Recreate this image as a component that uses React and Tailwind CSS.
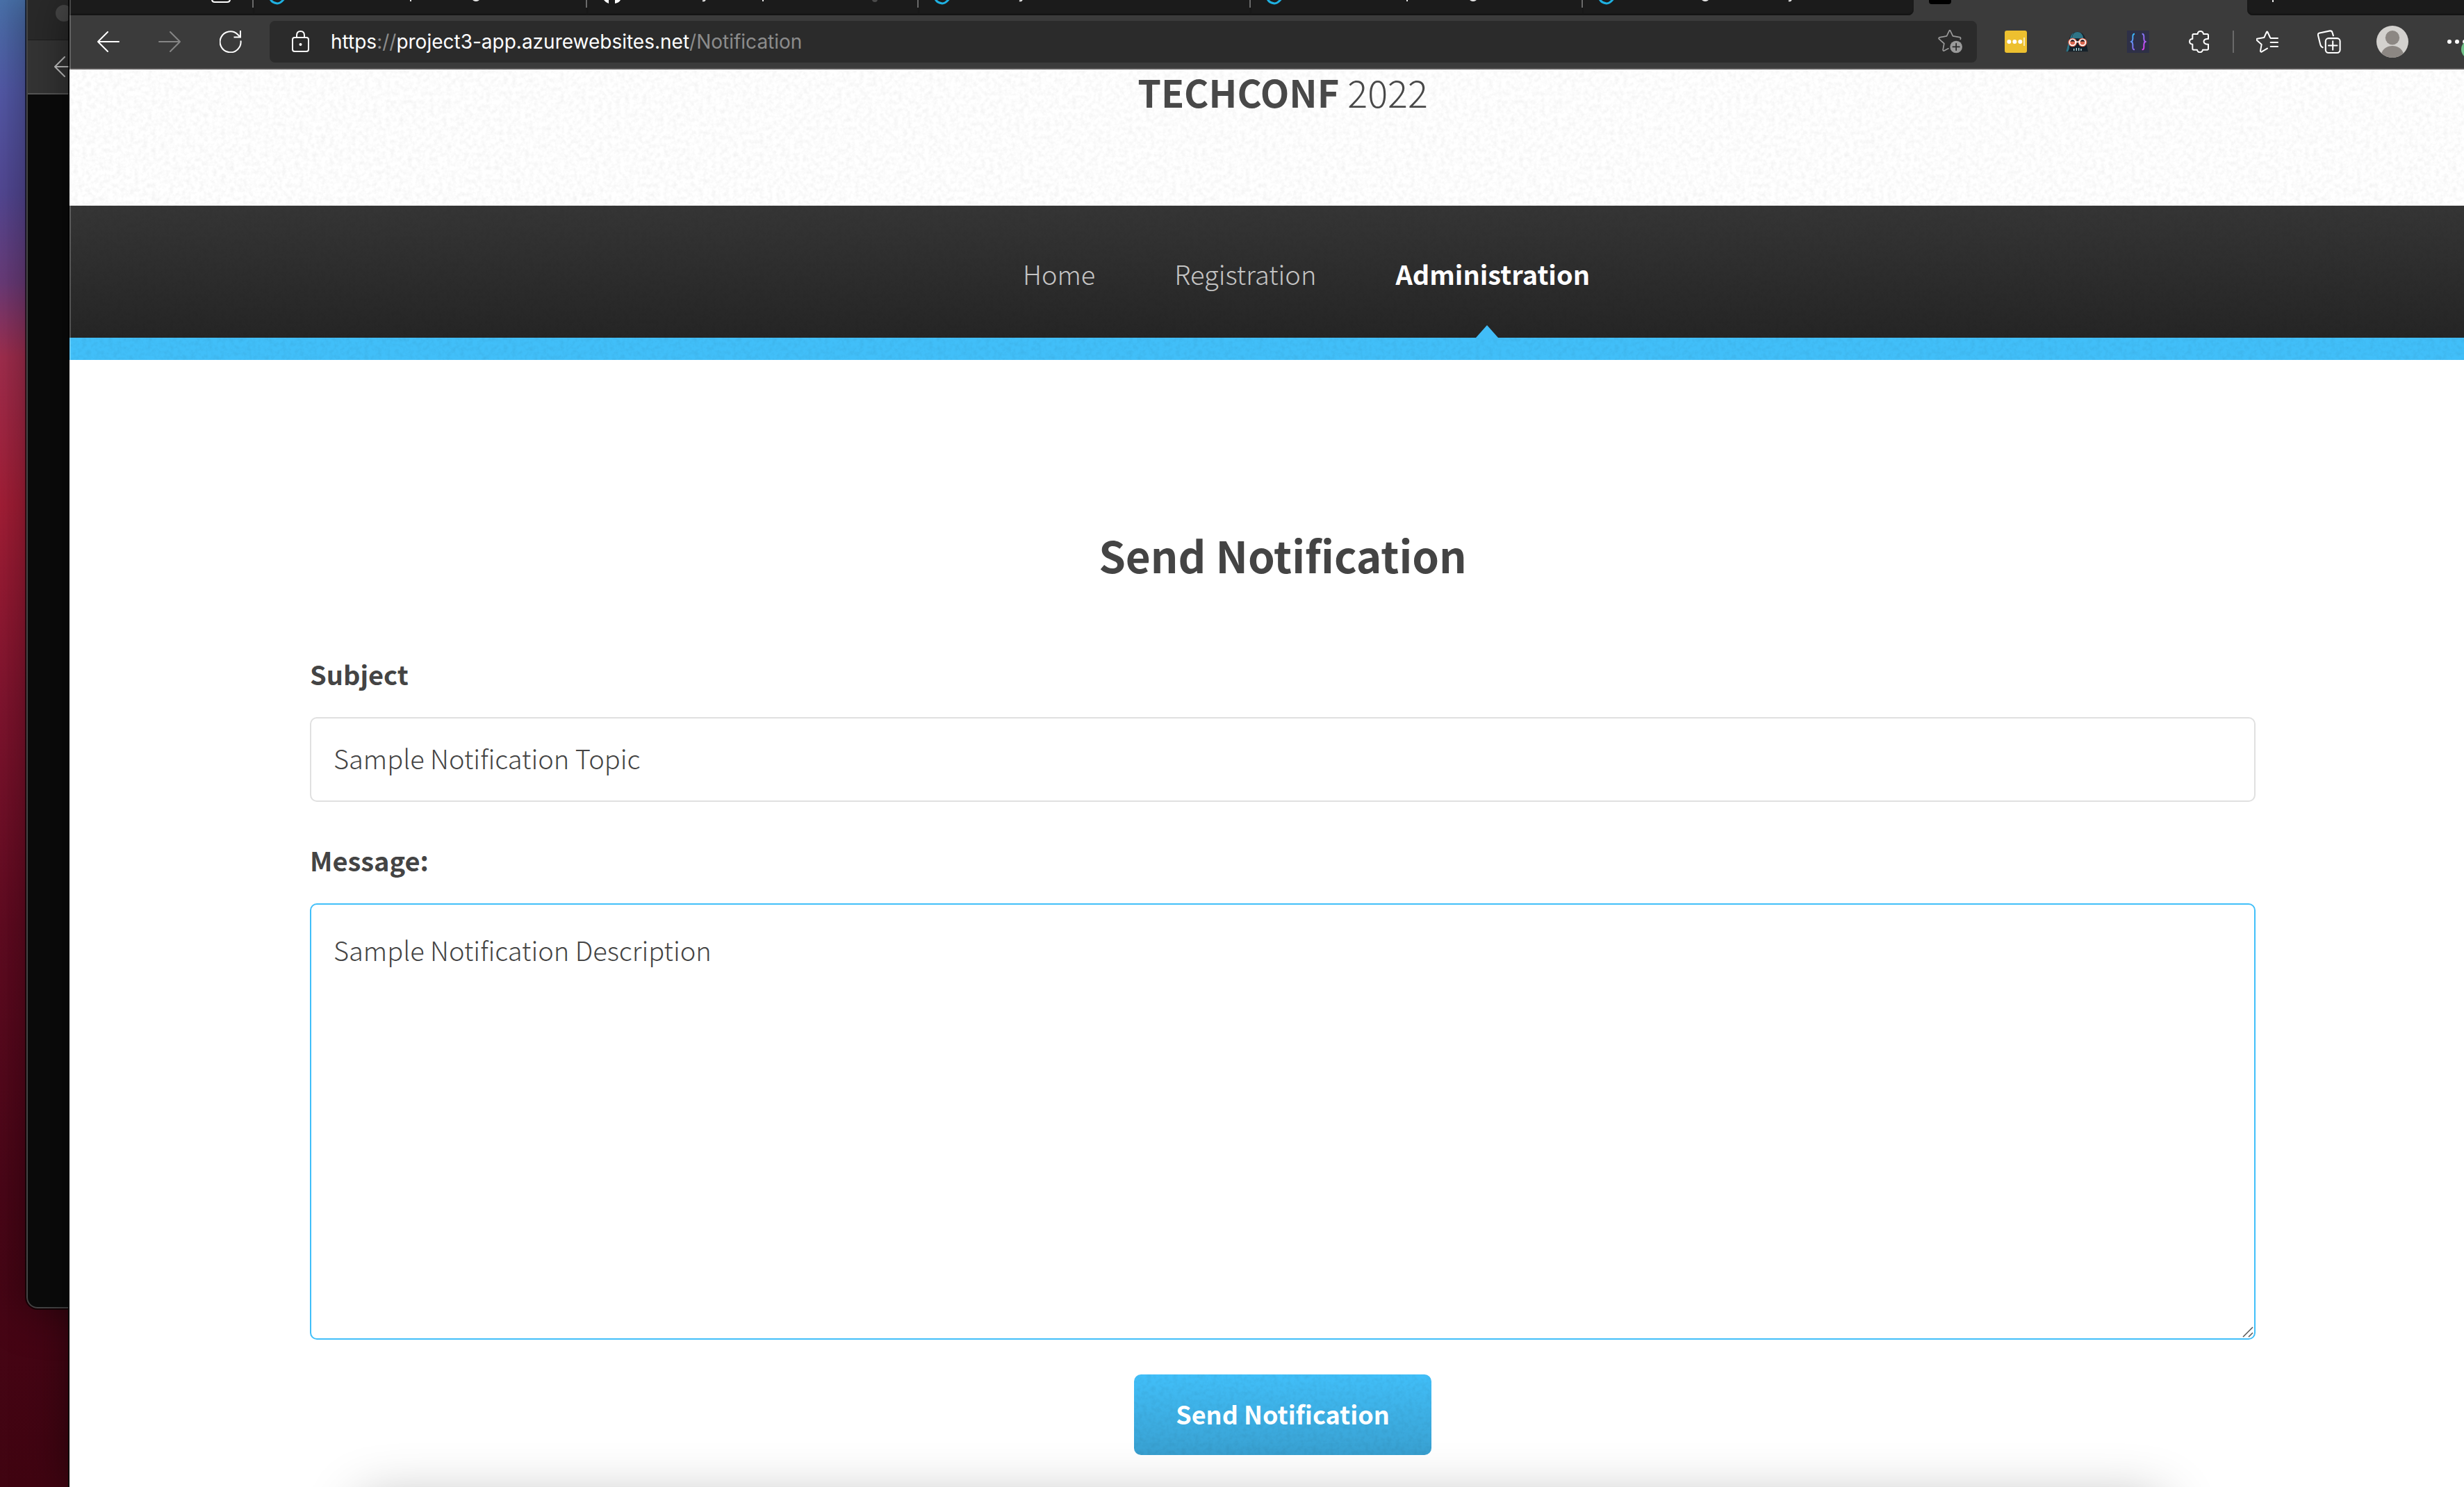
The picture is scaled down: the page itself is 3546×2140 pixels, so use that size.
import React from "react";

/* Fine paper grain laid over header, navigation and button surfaces */
function Grain({ id, strength }) {
  return (
    <svg aria-hidden="true" className="pointer-events-none absolute inset-0 size-full">
      <filter id={id} x="0" y="0" width="100%" height="100%">
        <feTurbulence type="fractalNoise" baseFrequency="0.16" numOctaves="3" seed="4" stitchTiles="stitch" />
        <feColorMatrix values={`0 0 0 0 0  0 0 0 0 0  0 0 0 0 0  ${strength} 0 0 0 ${-strength * 0.38}`} />
      </filter>
      <rect width="100%" height="100%" filter={`url(#${id})`} />
    </svg>
  );
}

function IconButton({ label, className = "", children }) {
  return (
    <button type="button" aria-label={label} className={"flex shrink-0 items-center justify-center " + className}>
      {children}
    </button>
  );
}

function ArrowLeft({ className }) {
  return (
    <svg viewBox="0 0 32 32" className={className} fill="none" stroke="currentColor" strokeWidth="2" strokeLinecap="round" strokeLinejoin="round">
      <path d="M31 16H1M15 2 1 16l14 14" />
    </svg>
  );
}

const tabs = [
  { width: "w-[265px]", marks: "window" },
  { width: "w-[480px]", marks: "ring", text: ["p:226", "g:320"] },
  { width: "w-[477px]", marks: "github", text: ["y:170", "p:253", "d:414"] },
  { width: "w-[478px]", marks: "ring", text: ["y:149"] },
  { width: "w-[478px]", marks: "ring", text: ["p:225", "g:320"] },
  { width: "w-[476px]", marks: "ring", text: ["g:176", "y:300"], last: true },
];

function Tab({ tab }) {
  return (
    <div
      className={
        "flex h-full shrink-0 items-start bg-[#1b1b1b] shadow-[inset_0_-2px_2px_#141414] " +
        tab.width + (tab.last ? " rounded-br-lg" : "")
      }
    >
      <svg viewBox="0 0 480 12" className="h-3 w-[480px] shrink-0" fill="none">
        {tab.marks === "window" && <path d="M205-4v3q0 4 4 4h18q4 0 4-4v-3M212-4v4" stroke="#fff" strokeWidth="2" />}
        {tab.marks === "ring" && <path d="M23-4q2 8 11 9 5 0 11-8" stroke="#1fb0e0" strokeWidth="3" />}
        {tab.marks === "github" && (
          <path d="M24 0q2 3 7 5V0q-2-1-2-3h12q0 2-1 3v5q6-1 8-5v-4H24z" fill="#fff" />
        )}
        {(tab.text || []).map((t) => {
          const [glyph, at] = t.split(":");
          const x = Number(at);
          if (glyph === "p") return <path key={t} d={`M${x}-2v4`} stroke="#e6e6e6" strokeWidth="2" />;
          if (glyph === "y") return <path key={t} d={`M${x}-1q-1 3-4 2`} stroke="#e6e6e6" strokeWidth="2" />;
          if (glyph === "d") return <circle key={t} cx={x} cy="-1" r="4" fill="#4a4a4a" />;
          return <ellipse key={t} cx={x} cy="-1" rx="5" ry="3" fill="#e6e6e6" />;
        })}
      </svg>
    </div>
  );
}

function TabStrip() {
  return (
    <div className="flex h-[22px] bg-[#3b3b3b]">
      {tabs.map((tab, i) => (
        <React.Fragment key={i}>
          <Tab tab={tab} />
          {!tab.last && <div className="-ml-0.5 h-[11px] w-0.5 shrink-0 bg-[#6a6a6a]" />}
        </React.Fragment>
      ))}
      <div className="w-[480px] shrink-0 pl-[22px]">
        <div className="h-1.5 w-8 rounded-b-sm bg-black" />
      </div>
      <div className="flex-1 rounded-bl-lg bg-[#1b1b1b] pl-9 shadow-[inset_0_-2px_2px_#141414]">
        <div className="h-[3px] w-0.5 bg-[#e6e6e6]" />
      </div>
    </div>
  );
}

function AddressBar() {
  return (
    <div className="ml-10 flex h-[60px] flex-1 items-center rounded-lg bg-[#2b2b2b] pr-5 pl-8">
      <svg viewBox="0 0 26 32" className="h-8 w-[26px] shrink-0" fill="none" stroke="#fff" strokeWidth="2">
        <rect x="1" y="10" width="23" height="20" rx="3" />
        <path d="M7 10V7q0-6 5.500-6T18 7v3" />
        <circle cx="12.500" cy="20" r="2" fill="#fff" stroke="none" />
      </svg>
      <div
        role="textbox"
        aria-label="Address"
        className="ml-[30px] flex-1 font-['Inter',sans-serif] text-[28px] leading-8 whitespace-nowrap text-[#8c8c8c]"
      >
        <span className="text-white">https</span>://<span className="text-white">project3-app.azurewebsites.net</span>/Notification
      </div>
      <IconButton label="Add this page to favorites">
        <svg viewBox="58 72 106 106" className="size-9" fill="none" stroke="#9a9a9a" strokeWidth="5" strokeLinecap="round" strokeLinejoin="round">
          <path d="M153 114q3-6-3-8l-29-5-11-23q-2-3-4 0L95 101l-31 6q-4 2-2 6l22 20-5 27q1 5 5 3l18-9" />
          <circle cx="135" cy="147" r="26" fill="#9a9a9a" stroke="none" />
          <path d="M135 133v28M121 147h28" stroke="#2b2b2b" />
        </svg>
      </IconButton>
    </div>
  );
}

function Toolbar() {
  return (
    <div className="flex h-[78px] items-center border-b-2 border-[#5c5a5a] bg-[#3b3b3b] pr-[38px] pl-10 text-white">
      <IconButton label="Back"><ArrowLeft className="size-8" /></IconButton>
      <IconButton label="Forward" className="ml-14 text-[#858585]"><ArrowLeft className="size-8 rotate-180" /></IconButton>
      <IconButton label="Refresh" className="ml-14">
        <svg viewBox="0 0 32 32" className="size-8" fill="none" stroke="currentColor" strokeWidth="2">
          <path d="M30.500 14.500A15 15 0 1 1 26 5.500L29.500 9M30 0v9.500H20.500" />
        </svg>
      </IconButton>
      <AddressBar />
      <IconButton label="Password manager" className="ml-10">
        <svg viewBox="0 0 96 96" className="size-8">
          <rect width="96" height="96" rx="9" fill="#edc02f" />
          <g fill="#fff"><circle cx="19" cy="48" r="9" /><circle cx="43" cy="48" r="9" /><circle cx="67" cy="48" r="9" /></g>
          <path d="M84 30v36" stroke="#f8e9b4" strokeWidth="6" />
        </svg>
      </IconButton>
      <IconButton label="Dark reader" className="ml-14">
        <svg viewBox="612 72 96 96" className="size-8">
          <path d="M613 163 626 112C630 86 648 77 662 77s32 9 35 35l11 51z" fill="#15212a" />
          <path d="M613 163 624 120q8 30-4 43zM639 106c1-18 9-28 23-28s24 10 26 28z" fill="#2f7486" />
          <path d="M630 108c2-14 8-23 17-27-7 8-9 17-9 27z" fill="#2f7486" />
          <g fill="#1d2229" stroke="#e8664c" strokeWidth="6"><circle cx="641" cy="123" r="16" /><circle cx="684" cy="123" r="16" /></g>
          <g fill="#d9644c" stroke="#fff" strokeWidth="5"><circle cx="641" cy="123" r="13" /><circle cx="684" cy="123" r="13" /><path d="M654 121h17" /></g>
          <path d="M631 119h20q-3-8-10-8t-10 8zM674 119h20q-3-8-10-8t-10 8z" fill="#2a2226" />
          <path d="M647 150v9M658 147v12M668 147v12M678 150v9" stroke="#b7e0e4" strokeWidth="4" />
        </svg>
      </IconButton>
      <IconButton label="Code formatter" className="ml-14">
        <svg viewBox="125 72 96 96" className="size-8" fill="none" strokeWidth="6">
          <defs>
            <linearGradient id="braceLeft" x1="0" y1="0" x2="0" y2="1"><stop stopColor="#35b6f5" /><stop offset="1" stopColor="#8d6cf2" /></linearGradient>
            <linearGradient id="braceRight" x1="0" y1="0" x2="0" y2="1"><stop stopColor="#7d76f4" /><stop offset="1" stopColor="#e03bf0" /></linearGradient>
          </defs>
          <rect x="125" y="72" width="96" height="96" fill="#2e3047" />
          <path d="M158 86c-7 0-8 4-8 11v11q0 9-6 12 6 3 6 12v11c0 8 1 11 8 11" stroke="url(#braceLeft)" />
          <path d="M190 86c7 0 8 4 8 11v11q0 9 6 12-6 3-6 12v11c0 8-1 11-8 11" stroke="url(#braceRight)" />
        </svg>
      </IconButton>
      <IconButton label="Extensions" className="ml-14">
        <svg viewBox="389 72 96 96" className="size-8" fill="none" stroke="currentColor" strokeWidth="6" strokeLinejoin="round">
          <path d="M408 108V92q0-5 5-5h17c1-16 23-16 25 0h16q5 0 5 5v16c-26-3-26 25 0 23v19q0 5-5 5h-19c-2 14-22 14-24 0h-15q-5 0-5-5v-19c-17 0-17-23 0-23z" />
        </svg>
      </IconButton>
      <div className="ml-8 h-8 w-0.5 bg-[#6a6a6a]" />
      <IconButton label="Favorites" className="ml-8">
        <svg viewBox="680 72 96 96" className="size-8" fill="none" stroke="currentColor" strokeWidth="6" strokeLinecap="round" strokeLinejoin="round">
          <path d="M740 102 729 78q-2-3-4 0l-11 24-30 5q-4 2-2 6l21 19-5 28q1 5 5 4l25-15" />
          <path d="M742 105h31M742 123h31M742 141h31" />
        </svg>
      </IconButton>
      <IconButton label="Collections" className="ml-14">
        <svg viewBox="941 70 98 98" className="size-[34px]" fill="none" stroke="currentColor" strokeWidth="6" strokeLinecap="round">
          <path d="M963 143q-7-2-10-13l-9-37q-2-8 6-10l43-9q8-1 10 7l4 13" />
          <rect x="975" y="105" width="60" height="60" rx="12" />
          <path d="M1005 117v36M987 135h36" />
        </svg>
      </IconButton>
      <IconButton label="Profile" className="ml-[51px]">
        <svg viewBox="0 0 136 136" className="size-[46px]">
          <clipPath id="avatarClip"><circle cx="68" cy="68" r="68" /></clipPath>
          <g clipPath="url(#avatarClip)">
            <rect width="136" height="136" fill="#d3d1ce" />
            <circle cx="68" cy="51" r="30" fill="#8c8783" />
            <path d="M20 122C26 98 46 86 68 86s42 12 48 36v20H20z" fill="#8c8783" />
          </g>
        </svg>
      </IconButton>
      <IconButton label="Settings and more" className="ml-14">
        <svg viewBox="0 0 32 32" className="size-8 overflow-visible">
          <g fill="#fff"><circle cx="3" cy="16" r="3" /><circle cx="14" cy="16" r="3" /><circle cx="25" cy="16" r="3" /></g>
          <circle cx="34" cy="27" r="14" fill="#6fc187" />
        </svg>
      </IconButton>
    </div>
  );
}

function BackgroundWindow() {
  return (
    <div
      aria-hidden="true"
      className="absolute top-0 bottom-[12%] left-[38px] w-40 overflow-hidden rounded-bl-2xl border-b-2 border-l-2 border-[#454545] bg-[#0b0b0b] shadow-[0_0_60px_10px_rgba(0,0,0,0.35)] outline-2 outline-black/60"
    >
      <div className="h-[58px] border-b border-[#1d1d1d] bg-[#292929] pt-[7px] pl-10">
        <div className="size-6 rounded-full bg-[#474747]" />
      </div>
      <div className="flex h-[78px] items-center border-b-2 border-[#565656] bg-[#343434] pl-[38px] text-[#c4c4c4]">
        <ArrowLeft className="size-8" />
      </div>
    </div>
  );
}

function SiteHeader() {
  return (
    <header>
      <div className="relative h-[196px] bg-white text-center text-[54px] leading-16 text-[#484848]">
        <Grain id="grainPaper" strength={0.09} />
        <h1 className="relative font-light"><strong className="font-bold">TECHCONF</strong> 2022</h1>
      </div>
      <nav className="relative bg-linear-to-b from-[#353535] to-[#252525] pt-[70px] pb-16">
        <Grain id="grainNav" strength={0.07} />
        <ul className="relative flex justify-center gap-[114px] pl-17 leading-14 font-light text-[#c4c4c4]">
          <li><a href="#home">Home</a></li>
          <li><a href="#registration">Registration</a></li>
          <li className="relative">
            <a href="#administration" aria-current="page" className="font-bold text-white">Administration</a>
            <svg viewBox="0 0 32 18" className="absolute top-[102px] left-1/2 -ml-6 h-[18px] w-8"><path d="M0 18 16 0l16 18z" fill="#41bdf8" /></svg>
          </li>
        </ul>
      </nav>
      <div className="relative h-8 bg-[#41bff9]"><Grain id="grainBlue" strength={0.1} /></div>
    </header>
  );
}

function NotificationForm() {
  return (
    <main className="mx-auto flex max-w-[2800px] flex-col pt-60">
      <h2 className="mb-26 text-center text-[62px] leading-20 font-bold">Send Notification</h2>
      <form className="flex flex-col" onSubmit={(e) => e.preventDefault()}>
        <label htmlFor="subject" className="mb-[34px] leading-14 font-bold">Subject</label>
        <input
          id="subject"
          type="text"
          defaultValue="Sample Notification Topic"
          className="mb-14 h-[122px] rounded-[10px] border-2 border-[#e0e0e0] px-8 pb-1.5 font-light outline-none"
        />
        <label htmlFor="message" className="mb-[34px] leading-14 font-bold">Message:</label>
        <div className="relative flex">
          <textarea
            id="message"
            defaultValue="Sample Notification Description"
            className="h-[628px] flex-1 resize-none rounded-[10px] border-2 border-[#41bff9] px-8 py-8 leading-[66px] font-light outline-none"
          />
          <svg aria-hidden="true" viewBox="0 0 16 16" className="pointer-events-none absolute right-[3px] bottom-[3px] size-4" stroke="#555" strokeWidth="1.500">
            <path d="M1 15 15 1M9 15l6-6" />
          </svg>
        </div>
        <button
          type="submit"
          className="relative mt-[50px] mb-[46px] h-[116px] self-center overflow-hidden rounded-[10px] bg-linear-to-b from-[#41bff9] to-[#39a1d2] px-15 pb-1 text-[36px] font-bold text-white"
        >
          <Grain id="grainButton" strength={0.1} />
          <span className="relative">Send Notification</span>
        </button>
      </form>
    </main>
  );
}

export default function App() {
  return (
    <div className="relative h-screen overflow-hidden bg-[linear-gradient(180deg,#4b74ae_0%,#555cac_6%,#554a98_13%,#6d3d7c_19%,#a52f50_24%,#a81f38_34%,#851530_47%,#640b22_62%,#4c0618_80%,#400411_100%)]">
      <BackgroundWindow />
      <div className="relative -mr-[46px] ml-[100px] h-full overflow-hidden bg-white font-['Noto_Sans_CJK_SC',sans-serif] text-[38px] text-[#444444] shadow-[0_0_0_2px_rgba(0,0,0,0.75),0_0_60px_rgba(0,0,0,0.5)]">
        <TabStrip />
        <Toolbar />
        <SiteHeader />
        <NotificationForm />
        <div className="pointer-events-none absolute inset-y-0 left-0 w-0.5 bg-white/20" />
        <div className="pointer-events-none absolute top-full right-[480px] left-[420px] mt-5 h-40 shadow-[0_0_80px_rgba(0,0,0,0.3)]" />
      </div>
    </div>
  );
}
